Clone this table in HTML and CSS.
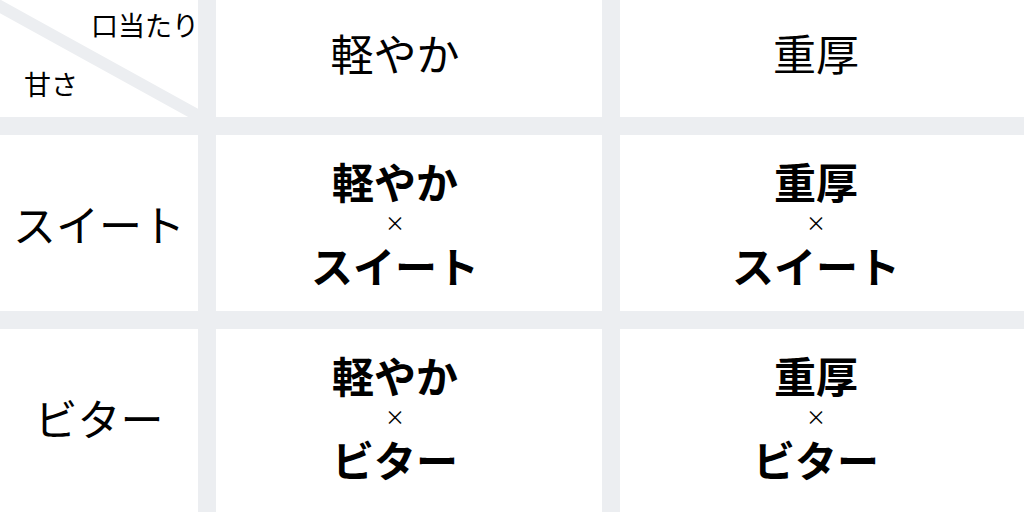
FILE: index.html
```html
<!DOCTYPE html>
<html lang="ja">
<head>
<meta charset="utf-8">
<link rel="stylesheet" href="styles.css">
</head>
<body>
<div class="matrix">
  <div class="cell corner">
    <svg class="diag" width="198" height="117" viewBox="0 0 198 117"><line x1="-6" y1="3" x2="206" y2="120" stroke="#eceef1" stroke-width="12"/></svg>
    <span class="axis-x">口当たり</span>
    <span class="axis-y">甘さ</span>
  </div>
  <div class="cell head col-light">軽やか</div>
  <div class="cell head col-heavy">重厚</div>

  <div class="cell label">スイート</div>
  <div class="cell combo col-light"><span class="big">軽やか</span><span class="times">×</span><span class="big">スイート</span></div>
  <div class="cell combo col-heavy"><span class="big">重厚</span><span class="times">×</span><span class="big">スイート</span></div>

  <div class="cell label last">ビター</div>
  <div class="cell combo col-light last"><span class="big">軽やか</span><span class="times">×</span><span class="big">ビター</span></div>
  <div class="cell combo col-heavy last"><span class="big">重厚</span><span class="times">×</span><span class="big">ビター</span></div>
</div>
</body>
</html>
```

FILE: styles.css
```css
html, body {
  margin: 0;
  padding: 0;
  width: 1024px;
  height: 512px;
  overflow: hidden;
  background: #fff;
}

.matrix {
  display: grid;
  grid-template-columns: 198px 386px 1fr;
  grid-template-rows: 117px 176px 200px;
  gap: 18px;
  background: #eceef1;
  font-family: "Noto Sans CJK JP", "Noto Sans", sans-serif;
  color: #000;
}

.cell {
  background: #fff;
  display: flex;
  flex-direction: column;
  align-items: center;
  justify-content: center;
}

.col-light {
  padding-right: 28px;
}

.col-heavy {
  padding-right: 12px;
}

.cell.last {
  padding-bottom: 24px;
}

.corner {
  position: relative;
  display: block;
}

.diag {
  position: absolute;
  left: 0;
  top: 0;
}

.axis-x {
  position: absolute;
  right: -1px;
  top: 5px;
  font-size: 27px;
  line-height: 40px;
}

.axis-y {
  position: absolute;
  left: 24px;
  top: 64px;
  font-size: 27px;
  line-height: 40px;
}

.head {
  font-size: 43px;
  line-height: 60px;
  padding-bottom: 14px;
}

.label {
  font-size: 43px;
  line-height: 60px;
}

.combo .big {
  font-size: 42px;
  font-weight: 700;
  line-height: 48px;
}

.combo .times {
  font-size: 20px;
  line-height: 36px;
}
```
